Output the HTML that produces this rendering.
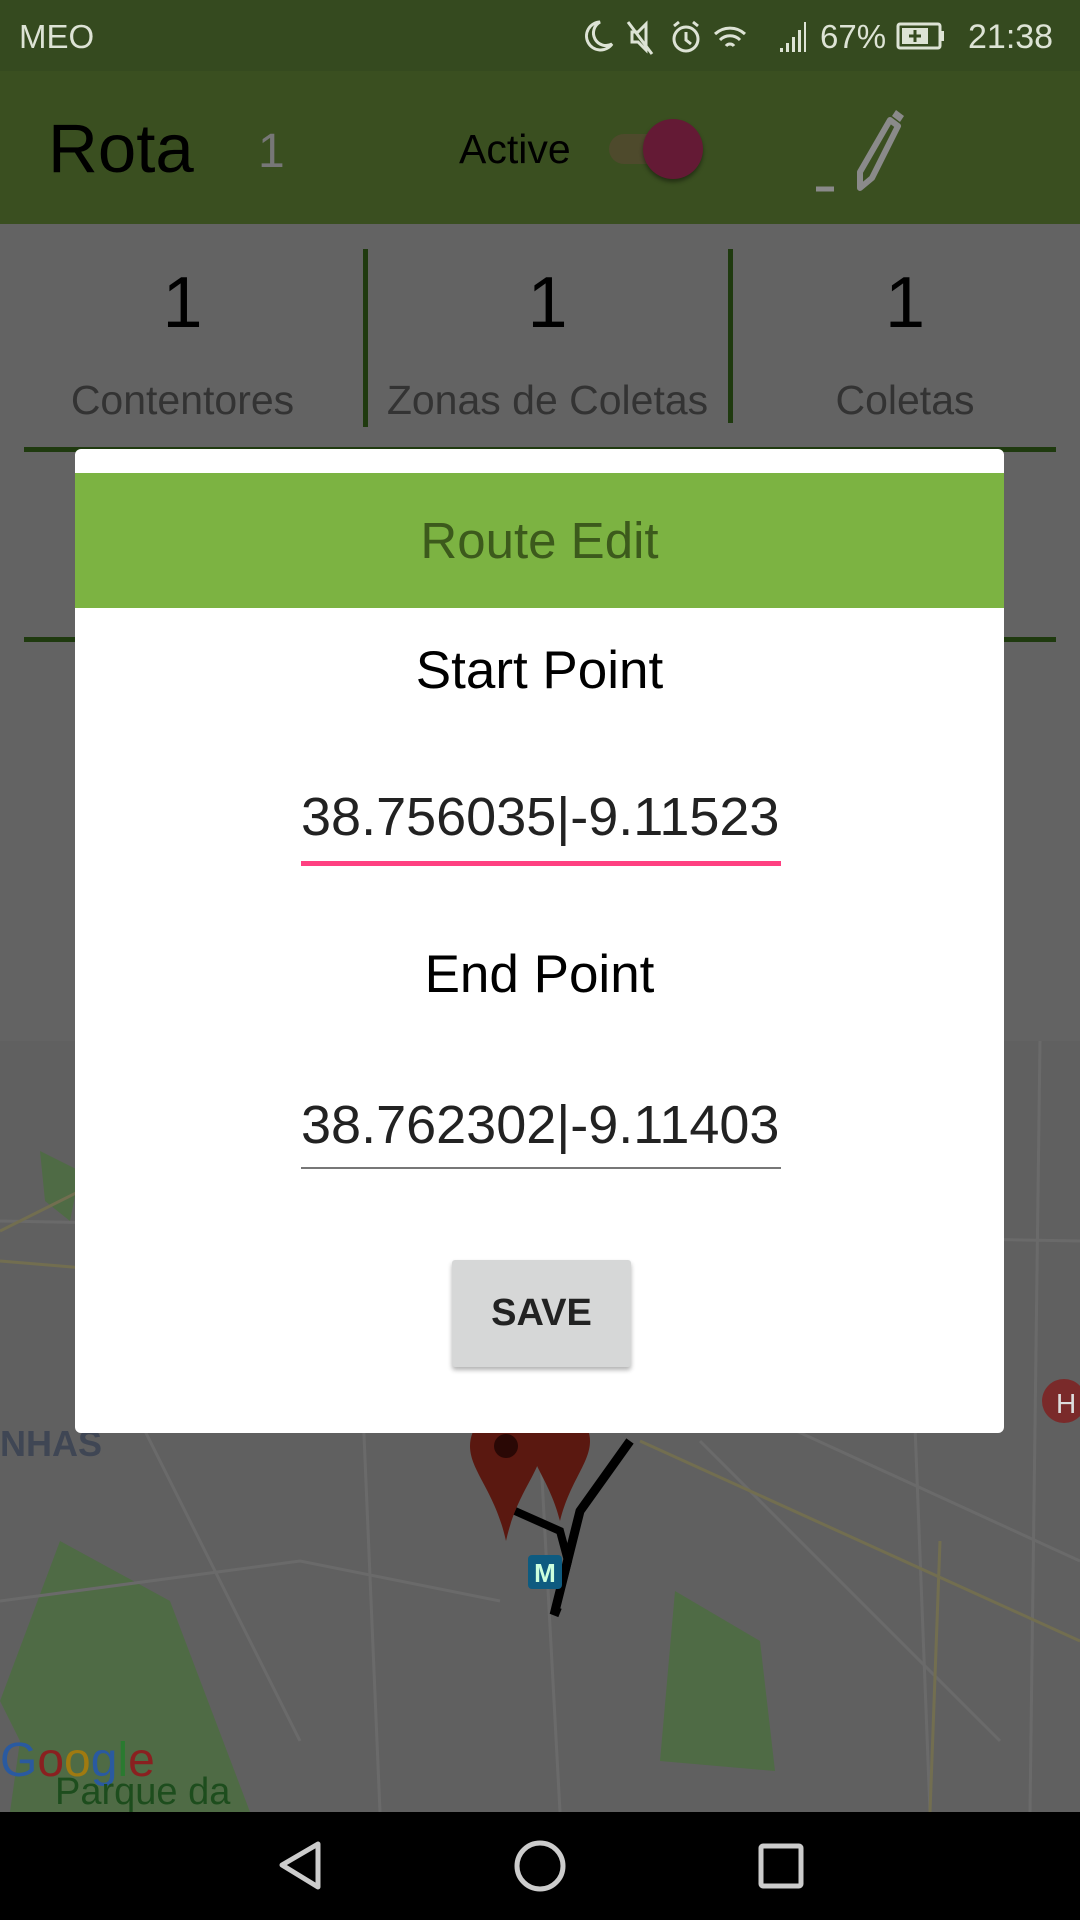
<!DOCTYPE html>
<html><head><meta charset="utf-8"><style>
*{margin:0;padding:0;box-sizing:border-box}
body{width:1080px;height:1920px;position:relative;overflow:hidden;background:#636363;font-family:"Liberation Sans",sans-serif}
.a{position:absolute}
.c{text-align:center}
</style></head><body>
<!-- status bar -->
<div class="a" style="left:0;top:0;width:1080px;height:71px;background:#354a1f"></div>
<div class="a" style="left:19px;top:18px;font-size:33px;color:#dde3d5">MEO</div>
<div class="a" style="left:820px;top:18px;font-size:33px;color:#dde3d5">67%</div>
<div class="a" style="left:968px;top:18px;font-size:34px;color:#dde3d5">21:38</div>
<svg class="a" style="left:580px;top:18px" width="380" height="40" viewBox="0 0 380 40">
<path d="M20 4a14 14 0 1 0 12 22a12 12 0 0 1-12-22z" fill="none" stroke="#dde3d5" stroke-width="3"/>
<path d="M52 14h6l8-8v26l-8-8h-6z M48 4l24 32" fill="none" stroke="#dde3d5" stroke-width="3"/>
<circle cx="106" cy="21" r="12" fill="none" stroke="#dde3d5" stroke-width="3"/><path d="M106 14v8l5 4M94 8l5-4M118 8l-5-4" stroke="#dde3d5" stroke-width="3" fill="none"/>
<path d="M135 16a22 22 0 0 1 30 0M140 22a14 14 0 0 1 20 0M146 28a5 5 0 0 1 8 0" stroke="#dde3d5" stroke-width="3" fill="none"/>
<path d="M200 34h3v-4h-3zM206 34h3v-9h-3zM212 34h3v-15h-3zM218 34h3v-22h-3zM224 34h2v-30h-2z" fill="#dde3d5"/>
<rect x="318" y="6" width="42" height="24" rx="2" fill="none" stroke="#dde3d5" stroke-width="3"/><rect x="361" y="13" width="3" height="10" fill="#dde3d5"/>
<rect x="322" y="10" width="26" height="16" fill="#dde3d5"/><path d="M335 12v12M329 18h12" stroke="#354a1f" stroke-width="3"/>
</svg>
<!-- app bar -->
<div class="a" style="left:0;top:71px;width:1080px;height:153px;background:#3a4f20"></div>
<div class="a" style="left:48px;top:109px;font-size:69px;color:#000">Rota</div>
<div class="a" style="left:258px;top:124px;font-size:48px;color:#777">1</div>
<div class="a" style="left:459px;top:126px;font-size:41px;color:#000">Active</div>
<div class="a" style="left:609px;top:134px;width:58px;height:30px;border-radius:15px;background:#4e4a2c"></div>
<div class="a" style="left:643px;top:119px;width:60px;height:60px;border-radius:50%;background:#641a35;box-shadow:0 3px 4px rgba(0,0,0,.4)"></div>
<svg class="a" style="left:812px;top:106px" width="100" height="90" viewBox="0 0 100 90">
<path d="M84 4l8 6-4 6-8-6z" fill="#8a8a8a"/>
<path d="M78 14l8 6-26 52-12 10 0-16z" fill="none" stroke="#8a8a8a" stroke-width="6" stroke-linejoin="round"/>
<path d="M4 83h18" stroke="#8a8a8a" stroke-width="5"/>
</svg>
<!-- stats -->
<div class="a c" style="left:0;top:262px;width:365px;font-size:72px;color:#000">1</div>
<div class="a c" style="left:365px;top:262px;width:365px;font-size:72px;color:#000">1</div>
<div class="a c" style="left:730px;top:262px;width:350px;font-size:72px;color:#000">1</div>
<div class="a c" style="left:0;top:377px;width:365px;font-size:41px;color:#333">Contentores</div>
<div class="a c" style="left:365px;top:377px;width:365px;font-size:41px;color:#333">Zonas de Coletas</div>
<div class="a c" style="left:730px;top:377px;width:350px;font-size:41px;color:#333">Coletas</div>
<div class="a" style="left:363px;top:249px;width:5px;height:178px;background:#1f3a0f"></div>
<div class="a" style="left:728px;top:249px;width:5px;height:174px;background:#1f3a0f"></div>
<div class="a" style="left:24px;top:447px;width:1032px;height:5px;background:#1f3a0f"></div>
<div class="a" style="left:24px;top:637px;width:1032px;height:5px;background:#1f3a0f"></div>
<!-- map -->
<svg class="a" style="left:0;top:1041px" width="1080" height="771" viewBox="0 0 1080 771">
<rect width="1080" height="771" fill="#606060"/>
<path d="M0 660 L20 700 L10 771 L250 771 L170 560 L60 500 Z" fill="#4f6b45"/>
<path d="M675 550 L760 600 L775 730 L660 720 Z" fill="#4f6b45"/>
<path d="M40 110 L80 130 L70 180 L45 160Z" fill="#4f6b45"/>
<g stroke="#6a6a6a" stroke-width="3" fill="none">
<path d="M0 180 L1080 200"/><path d="M360 300 L380 771"/><path d="M540 400 L560 771"/><path d="M0 560 L300 520 L500 560"/>
<path d="M600 300 L1080 520"/><path d="M900 0 L930 771"/><path d="M100 300 L300 700"/><path d="M700 400 L1000 700"/>
<path d="M200 0 L250 300"/><path d="M1040 0 L1030 771"/>
</g>
<g stroke="#726e50" stroke-width="3" fill="none"><path d="M0 190 L80 150"/><path d="M640 400 L1080 600"/><path d="M940 500 L930 771"/><path d="M0 220 L120 230"/></g>
<path d="M630 400 L580 470 L555 570 L560 572" stroke="#000" stroke-width="9" fill="none"/>
<path d="M515 470 L560 490 L568 520 L555 570" stroke="#000" stroke-width="8" fill="none"/>
<path d="M470 405 a36 36 0 0 1 72 0 c0 25-25 45-36 95 c-11-50-36-70-36-95z" fill="#5a1810"/>
<path d="M530 400 a30 30 0 0 1 60 0 c0 22-20 40-30 80 c-10-40-30-58-30-80z" fill="#5a1810"/>
<circle cx="506" cy="405" r="12" fill="#2a0805"/>
<rect x="528" y="514" width="34" height="34" rx="4" fill="#0e5b80"/><text x="545" y="541" font-size="26" fill="#cfd" text-anchor="middle" font-family="Liberation Sans" font-weight="bold">M</text>
<text x="0" y="415" font-size="36" font-weight="bold" fill="#3f4654" font-family="Liberation Sans">NHAS</text>
<circle cx="1064" cy="360" r="22" fill="#7a2a2a"/><text x="1056" y="372" font-size="28" fill="#ddd" font-family="Liberation Sans">H</text>
<text x="0" y="735" font-size="48" font-family="Liberation Sans" fill="#2a5aa0">G<tspan fill="#8a2020">o</tspan><tspan fill="#a07a10">o</tspan><tspan fill="#2a5aa0">g</tspan><tspan fill="#2a7a30">l</tspan><tspan fill="#8a2020">e</tspan></text>
<text x="55" y="763" font-size="38" fill="#1d4d1d" font-family="Liberation Sans">Parque da</text>
</svg>
<!-- dialog -->
<div class="a" style="left:75px;top:449px;width:929px;height:984px;background:#fff;border-radius:6px"></div>
<div class="a c" style="left:75px;top:473px;width:929px;height:135px;background:#7cb342;color:#3c5a1c;font-size:51px;line-height:135px">Route Edit</div>
<div class="a c" style="left:75px;top:640px;width:929px;font-size:53px;color:#000">Start Point</div>
<div class="a" style="left:301px;top:786px;width:480px;height:66px;overflow:hidden;font-size:54px;color:#222;white-space:nowrap">38.756035|-9.115239</div>
<div class="a" style="left:301px;top:861px;width:480px;height:5px;background:#ff4081"></div>
<div class="a c" style="left:75px;top:944px;width:929px;font-size:53px;color:#000">End Point</div>
<div class="a" style="left:301px;top:1094px;width:480px;height:66px;overflow:hidden;font-size:54px;color:#222;white-space:nowrap">38.762302|-9.114037</div>
<div class="a" style="left:301px;top:1167px;width:480px;height:2px;background:#777"></div>
<div class="a c" style="left:452px;top:1260px;width:179px;height:107px;background:#d6d7d7;border-radius:3px;box-shadow:0 3px 5px rgba(0,0,0,.3);font-size:38px;line-height:107px;color:#222;font-weight:bold">SAVE</div>
<!-- nav -->
<div class="a" style="left:0;top:1812px;width:1080px;height:108px;background:#000"></div>
<svg class="a" style="left:0;top:1812px" width="1080" height="108" viewBox="0 0 1080 108">
<path d="M318 32 L282 53 L318 75 Z" fill="none" stroke="#ccc" stroke-width="5" stroke-linejoin="round"/>
<circle cx="540" cy="54" r="23" fill="none" stroke="#ccc" stroke-width="5"/>
<rect x="761" y="34" width="40" height="40" rx="2" fill="none" stroke="#ccc" stroke-width="5"/>
</svg>
</body></html>
